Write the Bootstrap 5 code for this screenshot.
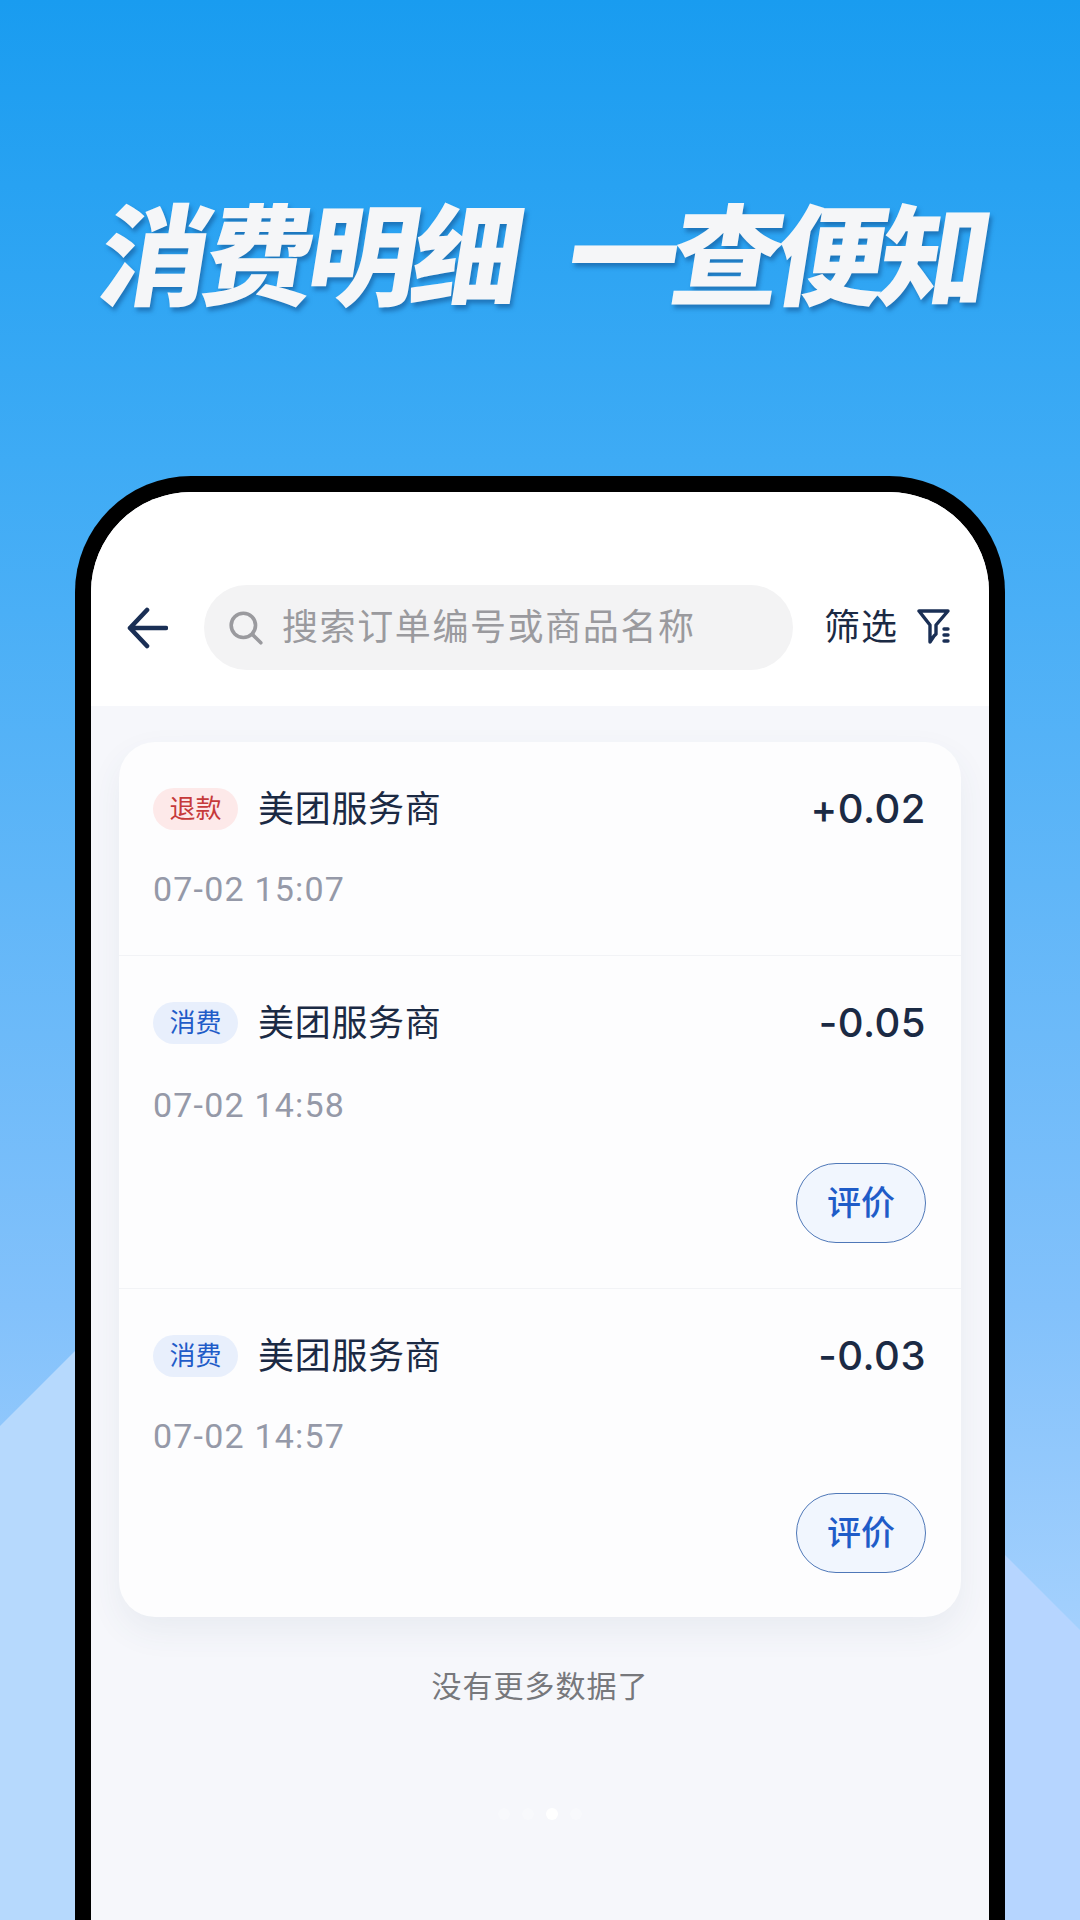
<!DOCTYPE html>
<html lang="zh-CN">
<head>
    <meta charset="UTF-8">
    <meta name="viewport" content="width=device-width, initial-scale=1.0">
    <title>消费明细 一查便知</title>
    <link href="https://cdn.jsdelivr.net/npm/bootstrap@5.3.1/dist/css/bootstrap.min.css" rel="stylesheet">
    <style>
        body {
            margin: 0;
            font-family: Roboto, "Noto Sans CJK SC", sans-serif;
            color: #1b2a44;
        }
        .page-wrap {
            position: relative;
            width: 1080px;
            height: 1920px;
            overflow: hidden;
            background: linear-gradient(180deg, #199cf0 0%, #3eabf5 24%, #82c1fb 68%, #c2deff 100%);
        }
        .bg-hills { position: absolute; left: 0; top: 0; }
        .hero-title {
            position: relative;
            height: 476px;
            padding: 179px 0 0 12px;
            gap: 52px;
            font-family: "Noto Sans CJK SC", sans-serif;
            font-size: 110px;
            line-height: 140px;
            font-weight: 900;
            color: #f5f6f8;
            letter-spacing: -6px;
            text-shadow: 3px 4px 4px rgba(16, 78, 140, .55);
            transform: skewX(-9deg);
        }
        .phone-frame {
            position: relative;
            width: 930px;
            height: 1444px;
            margin: 0 auto;
            border: 16px solid #000;
            border-bottom: 0;
            border-radius: 116px 116px 0 0;
            background: #f6f7fb;
            overflow: hidden;
        }
        .top-bar {
            height: 214px;
            padding: 93px 30px 0 36px;
            background: #fff;
        }
        .back-btn { width: 41px; height: 42px; margin-top: 22px; flex: none; }
        .top-right { height: 85px; }
        .search-pill {
            width: 589px;
            height: 85px;
            margin-left: 36px;
            padding-left: 24px;
            border-radius: 43px;
            background: #f3f3f4;
            color: #9a9a9e;
            font-size: 36px;
            letter-spacing: 1.6px;
        }
        .search-pill svg { width: 36px; height: 36px; margin-right: 18px; flex: none; }
        .filter-label { margin-left: 31px; font-size: 36px; letter-spacing: 1px; white-space: nowrap; }
        .filter-ico { width: 33px; height: 37px; margin-left: 19px; flex: none; }
        .records {
            width: 842px;
            margin: 36px 0 0 28px;
            border: 0;
            border-radius: 36px;
            background: #fdfdfe;
            box-shadow: 0 14px 34px rgba(60, 80, 120, .07);
        }
        .record {
            padding: 47px 35px 0 34px;
            border-color: #f2f3f6;
            background: transparent;
            color: #1b2a44;
        }
        .record-first { height: 214px; }
        .record-mid { height: 333px; }
        .record-last { height: 328px; }
        .record-last .rate-btn { margin-top: 37px; }
        .kind-tag {
            width: 85px;
            height: 42px;
            margin-top: -2px;
            border-radius: 21px;
            font-size: 26px;
            font-weight: 400;
            line-height: 42px;
            padding: 0;
        }
        .kind-refund { background: #fde9e9; color: #c63a3a; }
        .kind-spend { background: #e8effc; color: #1f5cc8; }
        .shop-name { margin-left: 20px; font-size: 36px; line-height: 42px; letter-spacing: .7px; }
        .amount {
            margin: -2px 0 0 auto;
            font-family: Inter, Roboto, sans-serif;
            font-size: 40px;
            font-weight: 500;
            line-height: 42px;
            letter-spacing: .5px;
        }
        .pay-time {
            margin-top: 38px;
            font-size: 34px;
            line-height: 40px;
            letter-spacing: 1.2px;
            color: #9599a8;
        }
        .record-mid .pay-time { margin-top: 40px; }
        .rate-btn {
            width: 130px;
            height: 80px;
            margin: 38px 0 0 auto;
            display: block;
            padding: 0;
            border: 1.5px solid #4f78b8;
            border-radius: 40px;
            background: #f1f6fe;
            color: #1f5cc8;
            font-size: 34px;
            font-weight: 500;
        }
        .no-more {
            margin-top: 50px;
            font-size: 30px;
            line-height: 40px;
            letter-spacing: 1px;
            color: #77787c;
        }
        .pager-dots { gap: 12px; margin-top: 101px; }
        .pager-dots i { width: 12px; height: 12px; border-radius: 50%; background: rgba(255, 255, 255, .25); }
        .pager-dots i.on { background: #fff; }
    </style>
</head>
<body>
    <div class="page-wrap">
        <svg class="bg-hills" width="1080" height="1920" viewBox="0 0 1080 1920">
            <polygon points="0,1426 75,1351 75,1920 0,1920" fill="#b6d9fd"/>
            <polygon points="1005,1555 1080,1630 1080,1920 1005,1920" fill="#b6d5ff"/>
        </svg>

        <div class="hero-title d-flex justify-content-center">
            <span>消费明细</span>
            <span>一查便知</span>
        </div>

        <div class="phone-frame">
            <div class="top-bar d-flex align-items-start">
                <svg class="back-btn" viewBox="0 0 41 42" fill="none" stroke="#1a2f55" stroke-width="4.6" stroke-linecap="round" stroke-linejoin="round">
                    <path d="M20 3 3 21l17 18M3 21h36"/>
                </svg>
                <div class="search-pill d-flex align-items-center">
                    <svg viewBox="0 0 34 34" fill="none" stroke="#9a9a9e" stroke-width="3.4" stroke-linecap="round">
                        <circle cx="14.5" cy="14.5" r="11.5"/>
                        <path d="M23 23l8 8"/>
                    </svg>
                    <span>搜索订单编号或商品名称</span>
                </div>
                <div class="top-right d-flex align-items-center">
                    <span class="filter-label">筛选</span>
                    <svg class="filter-ico" viewBox="0 0 33 37" fill="none" stroke="#1a2f55" stroke-width="3.4" stroke-linejoin="round" stroke-linecap="round">
                        <path d="M2 2h29L19 16v9l-2 2M2 2l11 14v17l4-6"/>
                        <path d="M27 20h4M27 26h4M27 32h4"/>
                    </svg>
                </div>
            </div>

            <div class="card records">
                <ul class="list-group list-group-flush" id="record-list">
                    <li class="list-group-item record record-first">
                        <div class="d-flex align-items-center">
                            <span class="badge kind-tag kind-refund">退款</span>
                            <span class="shop-name">美团服务商</span>
                            <span class="amount">+0.02</span>
                        </div>
                        <div class="pay-time">07-02 15:07</div>
                    </li>
                    <li class="list-group-item record record-mid">
                        <div class="d-flex align-items-center">
                            <span class="badge kind-tag kind-spend">消费</span>
                            <span class="shop-name">美团服务商</span>
                            <span class="amount">-0.05</span>
                        </div>
                        <div class="pay-time">07-02 14:58</div>
                        <button class="btn rate-btn" type="button">评价</button>
                    </li>
                    <li class="list-group-item record record-last">
                        <div class="d-flex align-items-center">
                            <span class="badge kind-tag kind-spend">消费</span>
                            <span class="shop-name">美团服务商</span>
                            <span class="amount">-0.03</span>
                        </div>
                        <div class="pay-time">07-02 14:57</div>
                        <button class="btn rate-btn" type="button">评价</button>
                    </li>
                </ul>
            </div>

            <div class="no-more text-center">没有更多数据了</div>
            <div class="pager-dots d-flex justify-content-center">
                <i></i><i></i><i class="on"></i><i></i>
            </div>
        </div>
    </div>

    <script src="https://cdn.jsdelivr.net/npm/bootstrap@5.3.1/dist/js/bootstrap.bundle.min.js"></script>
</body>
</html>
